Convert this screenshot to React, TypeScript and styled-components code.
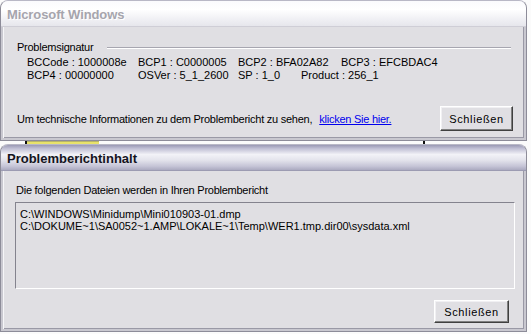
import React from "react";
import styled, { createGlobalStyle } from "styled-components";

const GlobalStyle = createGlobalStyle`
  html, body { margin: 0; padding: 0; background: #fbfbfb; }
  body { font-family: "Liberation Sans", Arial, sans-serif; font-size: 11px; color: #000; }
`;

const Desktop = styled.div`
  width: 531px;
  height: 334px;
  display: flex;
  flex-direction: column;
  overflow: hidden;
  background: #fbfbfb;
`;

const Window = styled.div<{ $h: number }>`
  width: 527px;
  height: ${(p) => p.$h}px;
  box-sizing: border-box;
  display: flex;
  flex-direction: column;
  border-radius: 8px 8px 0 0;
  border: 1px solid #8d8c99;
  border-top-color: #b9b8c6;
  overflow: hidden;
  background: #e0dfe3;
`;

const TitleBar = styled.div<{ $active?: boolean }>`
  height: 26px;
  flex: none;
  display: flex;
  align-items: center;
  padding: 2px 0 0 6px;
  box-sizing: border-box;
  font-family: "Liberation Sans", Arial, sans-serif;
  font-weight: bold;
  font-size: 13px;
  letter-spacing: ${(p) => (p.$active ? "0" : "-0.1px")};
  color: ${(p) => (p.$active ? "#141420" : "#a6a5ad")};
  text-shadow: ${(p) => (p.$active ? "none" : "1px 1px 0 #ffffff")};
  background: ${(p) =>
    p.$active
      ? "linear-gradient(#9a99b4 0%, #c0bfd4 14%, #f2f2f7 38%, #e4e4ec 60%, #c5c4d6 85%, #abaac0 100%)"
      : "linear-gradient(#fbfbfd 0%, #ffffff 35%, #f1f1f5 70%, #e6e6ec 100%)"};
  border-bottom: 1px solid ${(p) => (p.$active ? "#9c9bb2" : "#cfced6")};
`;

const Body = styled.div`
  flex: 1;
  display: flex;
  flex-direction: column;
  background: #e0dfe3;
  border-left: 2px solid #c9c8d0;
  border-right: 2px solid #c9c8d0;
  border-bottom: 2px solid #c9c8d0;
  box-shadow: inset 1px 0 0 #f6f6f8, inset -1px 0 0 #9a99a6, inset 0 -1px 0 #9a99a6;
`;

const Text = styled.span`
  letter-spacing: -0.25px;
`;

const GroupHeader = styled.div`
  display: flex;
  align-items: center;
  gap: 14px;
  padding: 14px 13px 0 14px;
  line-height: 12px;
`;

const GroupLine = styled.div`
  flex: 1;
  height: 1px;
  background: #a7a6b0;
  box-shadow: 0 1px 0 #ffffff;
`;

const SignatureBlock = styled.div`
  display: flex;
  flex-direction: column;
  padding: 3px 0 0 24px;
  line-height: 13px;
`;

const SigRow = styled.div`
  display: flex;
  white-space: nowrap;
`;

const SigCell = styled.span<{ $w?: number }>`
  ${(p) => (p.$w ? `width: ${p.$w}px;` : "")}
  flex: none;
`;

const InfoRow = styled.div`
  display: flex;
  align-items: center;
  padding: 24px 11px 0 14px;
`;

const Link = styled.a`
  color: #0000ee;
  text-decoration: underline;
  letter-spacing: -0.25px;
  margin-left: 7px;
  cursor: pointer;
`;

const Button = styled.button<{ $w: number; $h: number }>`
  margin-left: auto;
  width: ${(p) => p.$w}px;
  height: ${(p) => p.$h}px;
  box-sizing: border-box;
  background: #e0dfe3;
  font-family: "Liberation Sans", Arial, sans-serif;
  font-size: 11px;
  letter-spacing: 0.6px;
  color: #000;
  padding: 0;
  border: 1px solid;
  border-color: #ffffff #404040 #404040 #ffffff;
  box-shadow: inset -1px -1px 0 #808080, inset 1px 1px 0 #f1f0f3;
`;

const Strip = styled.div`
  height: 3px;
  flex: none;
  display: flex;
  align-items: stretch;
`;

const Tick = styled.div<{ $ml: number }>`
  width: 2px;
  margin-left: ${(p) => p.$ml}px;
  background: #101010;
`;

const Highlight = styled.div`
  width: 72px;
  background: #e8e26a;
  border-top: 1px solid #b8b46a;
`;

const FrontContent = styled.div`
  display: flex;
  flex-direction: column;
  padding: 13px 11px 0 12px;
  flex: 1;
`;

const Caption = styled.div`
  line-height: 12px;
  padding-left: 1px;
  letter-spacing: -0.25px;
`;

const ListBox = styled.div`
  margin-top: 6px;
  height: 87px;
  width: 500px;
  box-sizing: border-box;
  background: #e0dfe3;
  border: 1px solid;
  border-color: #84838e #ffffff #ffffff #84838e;
  padding: 5px 4px;
  line-height: 12px;
  white-space: nowrap;
`;

const ButtonRow = styled.div`
  display: flex;
  padding-top: 11px;
  padding-right: 4px;
`;

const sig1: [string, number | undefined][] = [
  ["BCCode : 1000008e", 111],
  ["BCP1 : C0000005", 100],
  ["BCP2 : BFA02A82", 103],
  ["BCP3 : EFCBDAC4", undefined],
];
const sig2: [string, number | undefined][] = [
  ["BCP4 : 00000000", 111],
  ["OSVer : 5_1_2600", 100],
  ["SP : 1_0", 63],
  ["Product : 256_1", undefined],
];

export default function App() {
  return (
    <>
      <GlobalStyle />
      <Desktop>
        <Window $h={141}>
          <TitleBar>Microsoft Windows</TitleBar>
          <Body>
            <GroupHeader>
              <Text>Problemsignatur</Text>
              <GroupLine />
            </GroupHeader>
            <SignatureBlock>
              {[sig1, sig2].map((row, i) => (
                <SigRow key={i}>
                  {row.map(([t, w]) => (
                    <SigCell key={t} $w={w}>
                      {t}
                    </SigCell>
                  ))}
                </SigRow>
              ))}
            </SignatureBlock>
            <InfoRow>
              <Text>Um technische Informationen zu dem Problembericht zu sehen,</Text>
              <Link>klicken Sie hier.</Link>
              <Button $w={73} $h={25}>Schließen</Button>
            </InfoRow>
          </Body>
        </Window>
        <Strip>
          <Tick $ml={25} />
          <Highlight />
          <Tick $ml={324} />
        </Strip>
        <Window $h={188}>
          <TitleBar $active>Problemberichtinhalt</TitleBar>
          <Body>
            <FrontContent>
              <Caption>Die folgenden Dateien werden in Ihren Problembericht</Caption>
              <ListBox>
                <div>C:\WINDOWS\Minidump\Mini010903-01.dmp</div>
                <div>C:\DOKUME~1\SA0052~1.AMP\LOKALE~1\Temp\WER1.tmp.dir00\sysdata.xml</div>
              </ListBox>
              <ButtonRow>
                <Button $w={75} $h={23}>Schließen</Button>
              </ButtonRow>
            </FrontContent>
          </Body>
        </Window>
      </Desktop>
    </>
  );
}
